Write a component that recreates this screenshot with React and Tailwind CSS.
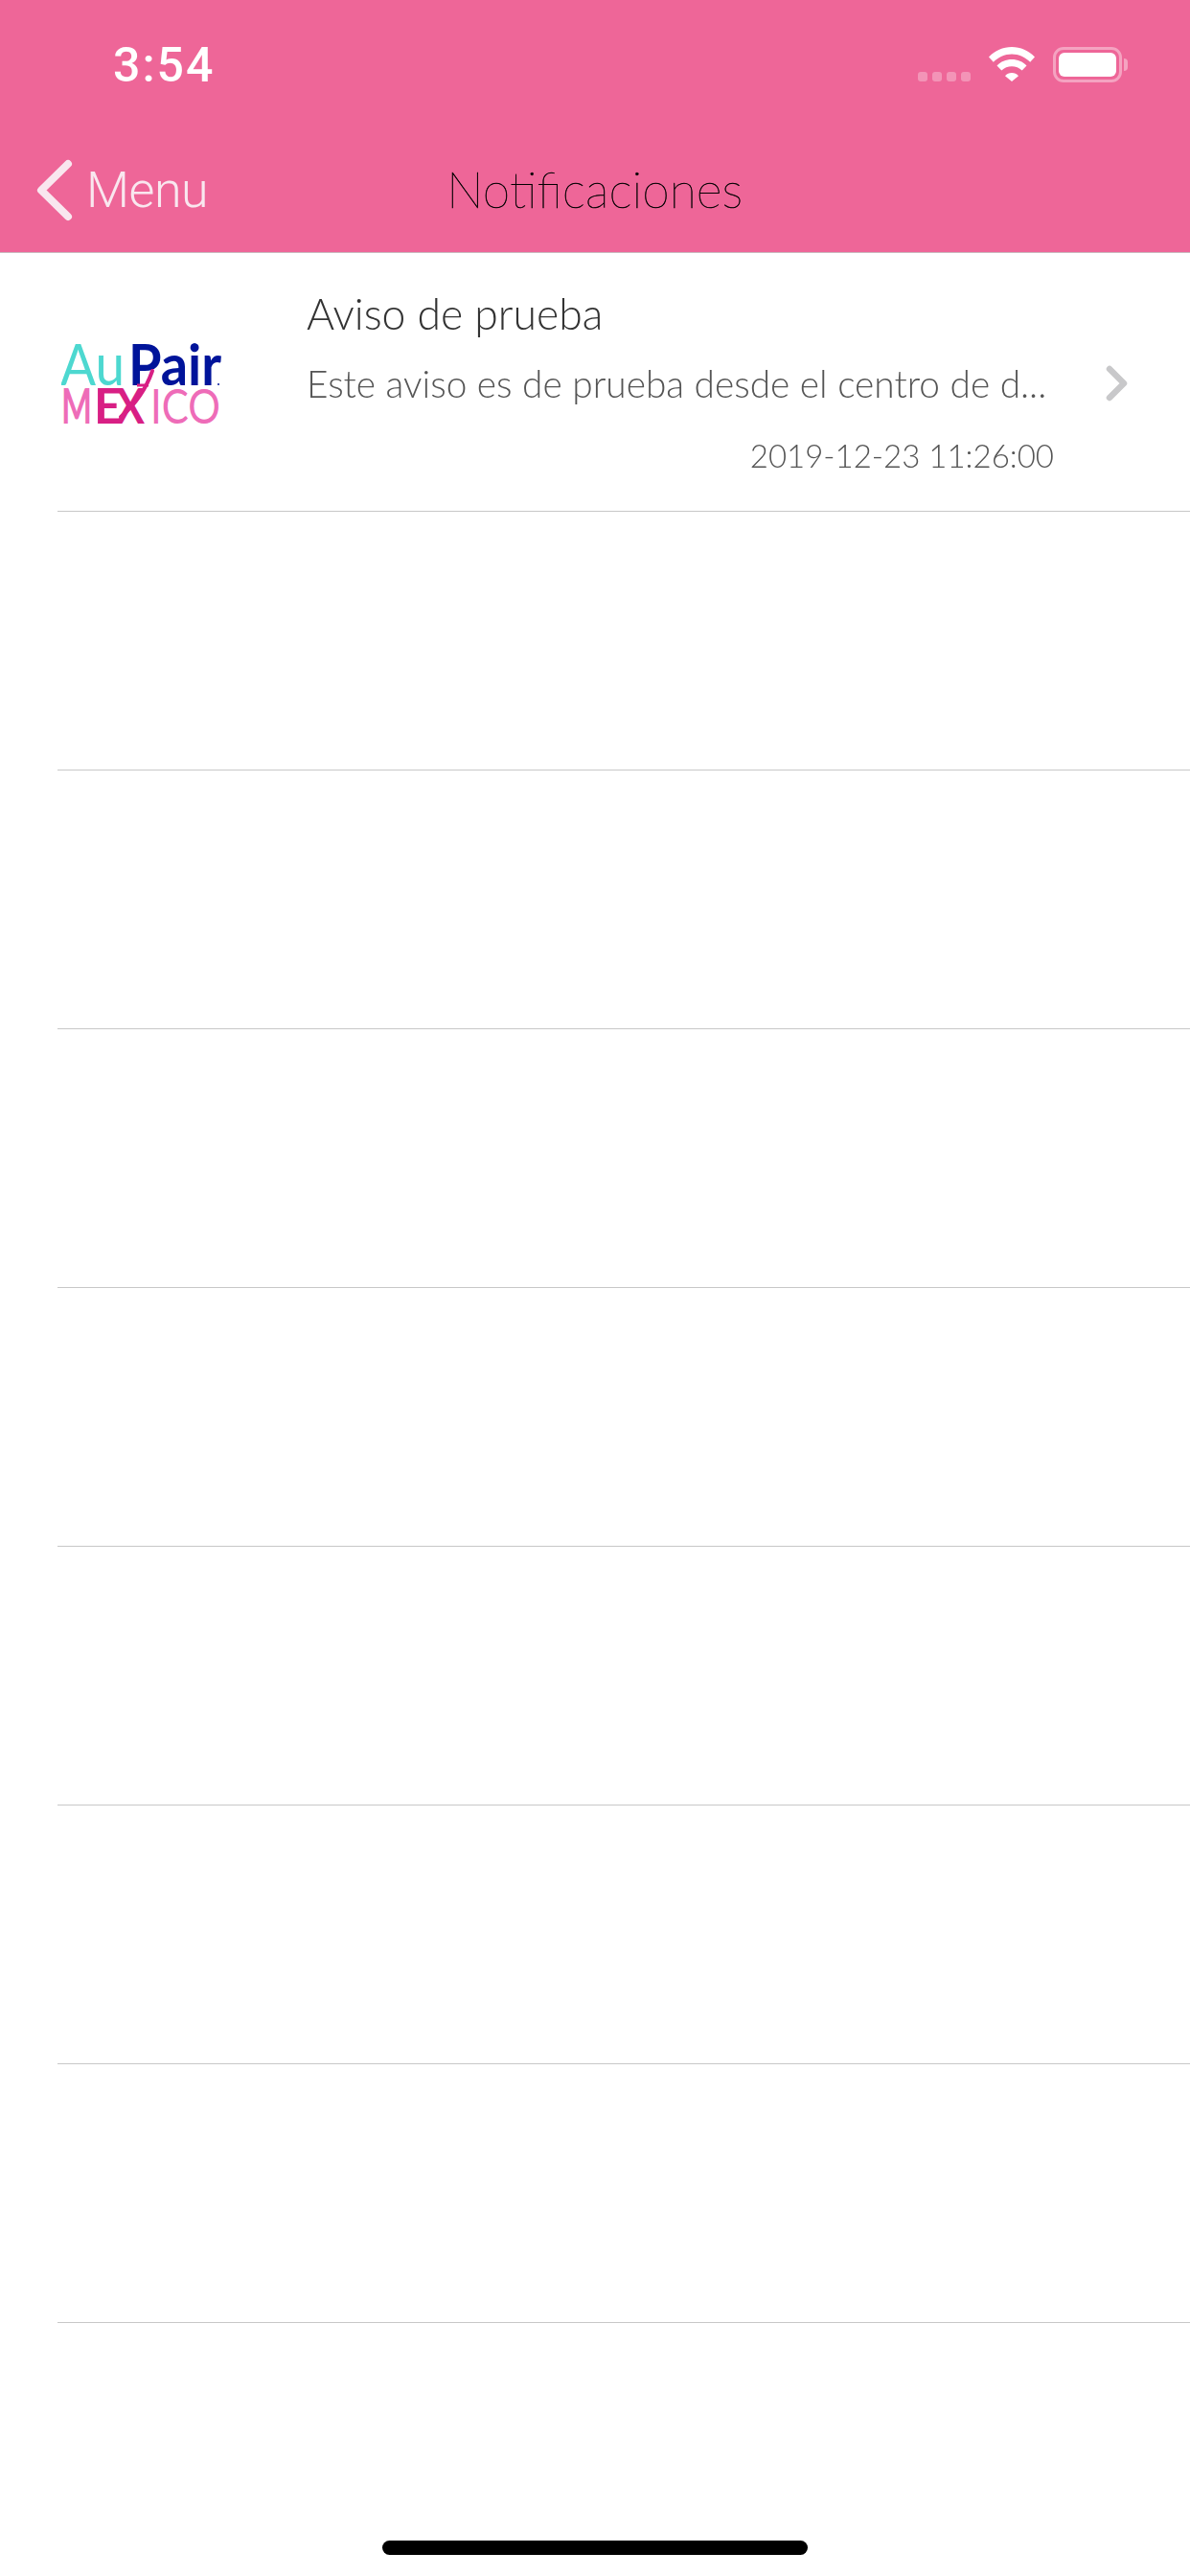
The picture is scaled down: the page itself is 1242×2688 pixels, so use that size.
import React from 'react';

function WifiIcon() {
  return (
    <svg width="48" height="36" viewBox="0 0 48 36" fill="#fff">
      <path d="M0 10.5C6.5 3.8 14.8 0 24 0s17.500 3.800 24 10.500l-4.800 5.300C38.200 10.800 31.500 7.500 24 7.500S9.800 10.800 4.800 15.800z" />
      <path d="M8.500 19.500C12.500 15.300 18 13 24 13s11.500 2.300 15.500 6.500l-4.800 5C31.800 21.800 28 20.300 24 20.300s-7.800 1.500-10.700 4.200z" />
      <path d="M17 30.200c1.800-2 4.300-3.200 7-3.200s5.200 1.200 7 3.200L24 36z" />
    </svg>
  );
}

function Battery() {
  return (
    <div className="flex items-center gap-[2px]">
      <div className="w-[72px] h-[37px] rounded-[11px] border-[3px] border-white/40 p-[3px]">
        <div className="w-full h-full rounded-[6px] bg-white"></div>
      </div>
      <div className="w-[4px] h-[13px] rounded-r-[4px] bg-white/40"></div>
    </div>
  );
}

function StatusBar() {
  return (
    <div className="h-[132px] flex justify-between pl-[118px] pr-[65px]">
      <span className="mt-[40px] text-[50px] leading-[56px] tracking-[2px] font-medium text-white font-['Roboto',sans-serif]">3:54</span>
      <div className="flex items-start mt-[49px]">
        <div className="flex gap-[5px] mt-[26px] mr-[19px]">
          <span className="w-[10px] h-[10px] rounded-[3px] bg-white/30"></span>
          <span className="w-[10px] h-[10px] rounded-[3px] bg-white/30"></span>
          <span className="w-[10px] h-[10px] rounded-[3px] bg-white/30"></span>
          <span className="w-[10px] h-[10px] rounded-[3px] bg-white/30"></span>
        </div>
        <WifiIcon />
        <div className="ml-[19px]">
          <Battery />
        </div>
      </div>
    </div>
  );
}

function NavBar() {
  return (
    <div className="h-[132px] grid grid-cols-[1fr_auto_1fr] items-start">
      <div className="flex items-start pl-[38px] pt-[34px]">
        <svg width="38" height="66" viewBox="0 0 38 66" fill="none" className="shrink-0">
          <path d="M33 5 L5 32.500 L33 60" stroke="#f9e7ef" strokeWidth="8" strokeLinecap="round" strokeLinejoin="round" />
        </svg>
        <span className="ml-[14px] mt-[3px] text-[52px] leading-[60px] tracking-[-0.5px] font-light text-[#f9e7ef] font-['Roboto',sans-serif]">Menu</span>
      </div>
      <span className="pt-[35px] text-[51.700px] leading-[60px] font-extralight text-black [-webkit-text-stroke:0.5px_#000] will-change-transform font-['Lato',sans-serif]">Notificaciones</span>
      <div></div>
    </div>
  );
}

function Logo() {
  return (
    <svg width="174" height="120" viewBox="0 -20 174 120" className="font-['Lato',sans-serif]">
      <text x="-1" y="47" fontSize="60" fill="#4dd8d0" fontWeight="400" textLength="67" lengthAdjust="spacingAndGlyphs">Au</text>
      <text x="70" y="47" fontSize="60" fill="#00149a" fontWeight="700" textLength="97" lengthAdjust="spacingAndGlyphs">Pair</text>
      <circle cx="164" cy="46" r="1" fill="#00149a" />
      <text x="0" y="87" fontSize="51" fill="#ee6cb8" fontWeight="700" textLength="32" lengthAdjust="spacingAndGlyphs">M</text>
      <text x="34" y="87" fontSize="51" fill="#d81f84" fontWeight="700" textLength="29" lengthAdjust="spacingAndGlyphs">E</text>
      <text x="57" y="87" fontSize="51" fill="#d81f84" fontWeight="700" textLength="30" lengthAdjust="spacingAndGlyphs">X</text>
      <text x="93" y="87" fontSize="51" fill="#ee6cb8" fontWeight="400" textLength="73" lengthAdjust="spacingAndGlyphs">ICO</text>
      <path d="M62 80 C76 68 88 52 95 32" stroke="#d81f84" strokeWidth="4" fill="none" strokeLinecap="round" />
      <path d="M79 47 L91 47" stroke="#d81f84" strokeWidth="3" fill="none" />
    </svg>
  );
}

function NotificationRow() {
  return (
    <div className="h-[270px] ml-[60px] flex border-b border-[#c8c8c8]">
      <div className="w-[260px] shrink-0 pl-[4px] pt-[71px]">
        <Logo />
      </div>
      <div className="w-[780px] shrink-0 pt-[36px] font-['Lato',sans-serif] font-light will-change-transform">
        <p className="text-[44.5px] leading-[54px] text-[#333333]">Aviso de prueba</p>
        <p className="mt-[23px] text-[38.800px] leading-[46px] text-[#555555] whitespace-nowrap">Este aviso es de prueba desde el centro de d...</p>
        <p className="mt-[31px] text-right text-[33px] leading-[42px] text-[#555555]">2019-12-23 11:26:00</p>
      </div>
      <svg width="24" height="38" viewBox="0 0 24 38" fill="none" className="ml-[54px] mt-[117px] shrink-0">
        <path d="M4 4 L19 19 L4 34" stroke="#c8c8ca" strokeWidth="6.500" strokeLinecap="round" strokeLinejoin="round" />
      </svg>
    </div>
  );
}

export default function App() {
  const rows = [0, 1, 2, 3, 4, 5, 6, 7];

  return (
    <div className="relative w-[1242px] h-[2688px] bg-white overflow-hidden">
      <header className="h-[264px] bg-[#ee6698] border-b border-[#c9b6bd]">
        <StatusBar />
        <NavBar />
      </header>
      {rows.map((r) =>
        r === 0 ? (
          <NotificationRow key={r} />
        ) : (
          <div key={r} className="h-[270px] ml-[60px] border-b border-[#c8c8c8]"></div>
        )
      )}
      <div className="absolute left-[399px] top-[2651px] w-[444px] h-[15px] rounded-full bg-black"></div>
    </div>
  );
}
